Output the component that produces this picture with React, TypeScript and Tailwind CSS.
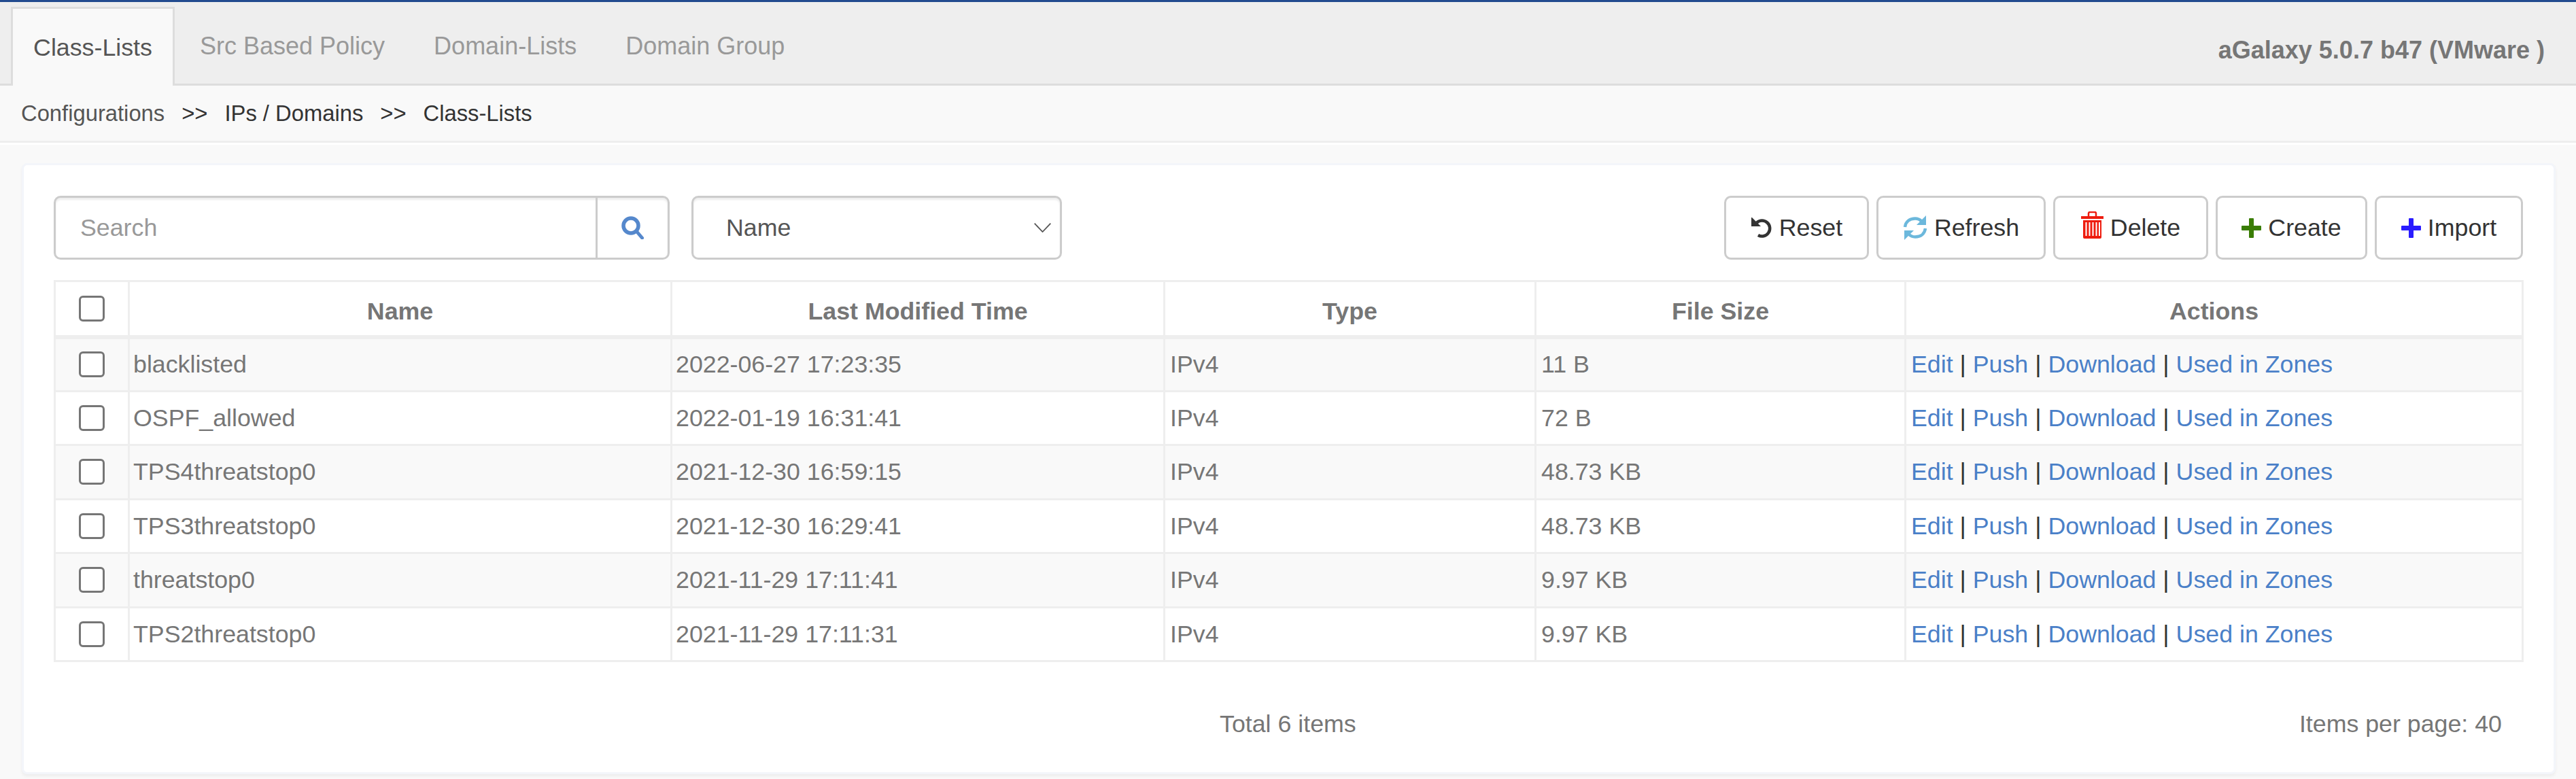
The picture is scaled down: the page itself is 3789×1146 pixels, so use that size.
const rows = [
  { name: "blacklisted", time: "2022-06-27 17:23:35", type: "IPv4", size: "11 B" },
  { name: "OSPF_allowed", time: "2022-01-19 16:31:41", type: "IPv4", size: "72 B" },
  { name: "TPS4threatstop0", time: "2021-12-30 16:59:15", type: "IPv4", size: "48.73 KB" },
  { name: "TPS3threatstop0", time: "2021-12-30 16:29:41", type: "IPv4", size: "48.73 KB" },
  { name: "threatstop0", time: "2021-11-29 17:11:41", type: "IPv4", size: "9.97 KB" },
  { name: "TPS2threatstop0", time: "2021-11-29 17:11:31", type: "IPv4", size: "9.97 KB" },
]

const tabs = ["Src Based Policy", "Domain-Lists", "Domain Group"]

function ResetIcon() {
  return (
    <svg viewBox="0 0 32 32" className="h-[32px] w-[32px] text-[#333]">
      <path d="M9 8.500A11.500 11.500 0 1 1 11 27" fill="none" stroke="currentColor" strokeWidth="4.500" />
      <path d="M1 1h1l13 13H1z" fill="currentColor" />
    </svg>
  )
}

function RefreshIcon() {
  return (
    <svg viewBox="0 0 36 36" className="h-[36px] w-[36px] text-[#6cb8dc]">
      <path d="M3 17C4 9 10 4.500 18 4.500c4 0 7 1.500 9.500 4" fill="none" stroke="currentColor" strokeWidth="4.500" />
      <path d="M33 19c-1 8-7 12.500-15 12.500-4 0-7-1.500-9.500-4" fill="none" stroke="currentColor" strokeWidth="4.500" />
      <path d="M34 0v14H20z" fill="currentColor" />
      <path d="M2 36V22h14z" fill="currentColor" />
    </svg>
  )
}

function TrashIcon() {
  return (
    <svg viewBox="0 0 33 40" className="mb-[8px] h-[40px] w-[33px] text-[#ee1c0e]">
      <path d="M0 7h33v4H0zM3 13h27v25a2 2 0 0 1-2 2H5a2 2 0 0 1-2-2z" fill="currentColor" />
      <path d="M11 7V3a2 2 0 0 1 2-2h7a2 2 0 0 1 2 2v4" fill="none" stroke="currentColor" strokeWidth="2.500" />
      <path d="M7.500 16v20M12.500 16v20M17.500 16v20M22.500 16v20M27 16v20" fill="none" stroke="#fff" strokeWidth="2" />
    </svg>
  )
}

function PlusIcon({ className }: { className: string }) {
  return (
    <svg viewBox="0 0 29 29" className={`h-[29px] w-[29px] ${className}`}>
      <path d="M11 1a1 1 0 0 1 1-1h5a1 1 0 0 1 1 1v10h10a1 1 0 0 1 1 1v5a1 1 0 0 1-1 1H18v10a1 1 0 0 1-1 1h-5a1 1 0 0 1-1-1V18H1a1 1 0 0 1-1-1v-5a1 1 0 0 1 1-1h10z" fill="currentColor" />
    </svg>
  )
}

function SearchIcon() {
  return (
    <svg viewBox="0 0 34 34" className="h-[34px] w-[34px] text-[#5588cc]">
      <circle cx="14" cy="14" r="11" fill="none" stroke="currentColor" strokeWidth="5.500" />
      <path d="M22 22 30.500 32" fill="none" stroke="currentColor" strokeWidth="5" strokeLinecap="round" />
    </svg>
  )
}

function SelectChevron() {
  return (
    <svg viewBox="0 0 25 14" className="h-[14px] w-[25px] text-[#555]">
      <path d="M.7.7 12.500 13 24.300.7" fill="none" stroke="currentColor" strokeWidth="1.800" />
    </svg>
  )
}

function Checkbox() {
  return <div className="mx-auto h-[38px] w-[38px] rounded-[6px] border-[3px] border-[#767676] bg-white" />
}

function ToolButton({ icon, label, className }: { icon: React.ReactNode; label: string; className: string }) {
  return (
    <button className={`flex h-[94px] items-center justify-center gap-[10px] rounded-[10px] border-[3px] border-[#ccc] bg-white text-[35.750px] text-[#333] ${className}`}>
      {icon}
      <span>{label}</span>
    </button>
  )
}

export default function App() {
  return (
    <div className="h-[1146px] w-[3789px] overflow-hidden border-t-[3px] border-[#224b8f] bg-[#f9f9f9] font-['Liberation_Sans',Arial,sans-serif] text-[35.750px] leading-[50px] text-[#767676]">
      {/* Tabs */}
      <div className="flex h-[123px] items-end justify-between border-b-[3px] border-[#ddd] bg-[#eee] pl-[16px] pr-[46px]">
        <div className="flex items-end">
          <div className="relative top-[3px] flex h-[116px] w-[241px] items-center justify-center border-x-[3px] border-t-[3px] border-[#ddd] bg-[#f9f9f9] text-[#555]">
            Class-Lists
          </div>
          <div className="flex pl-[1px] text-[36px]">
            {tabs.map((tab) => (
              <div key={tab} className="flex h-[113px] items-center px-[36px] pt-[3px] text-[#999]">
                {tab}
              </div>
            ))}
          </div>
        </div>
        <div className="mb-[24px] text-[36px] font-bold text-[#767676]">aGalaxy 5.0.7 b47 (VMware )</div>
      </div>

      {/* Breadcrumb */}
      <div className="flex h-[84px] items-center border-b-[3px] border-[#eee] pl-[31px] text-[32.750px] text-[#555]">
        <span>Configurations</span>
        <span className="mx-[25px] text-[#333]">&gt;&gt;</span>
        <span className="text-[#333]">IPs / Domains</span>
        <span className="mx-[25px] text-[#333]">&gt;&gt;</span>
        <span className="text-[#333]">Class-Lists</span>
      </div>
      <div className="h-[3px] bg-white" />

      <div className="pl-[32px] pr-[30px] pt-[27px]">
        <div className="h-[899px] rounded-[8px] border-[3px] border-[#f3f5fa] bg-white pl-[44px] pr-[45px] pt-[45px] shadow-[0_3px_4px_rgba(0,0,0,0.05)]">
          {/* Toolbar */}
          <div className="flex items-start justify-between">
            <div className="flex gap-[32px]">
              <div className="flex h-[94px] w-[906px] rounded-[10px] border-[3px] border-[#ccc] bg-white shadow-[inset_0_3px_3px_rgba(0,0,0,0.075)]">
                <div className="flex flex-1 items-center pl-[36px] text-[#999]">Search</div>
                <div className="flex w-[106px] items-center justify-center border-l-[3px] border-[#ccc]">
                  <SearchIcon />
                </div>
              </div>
              <div className="flex h-[94px] w-[545px] items-center justify-between rounded-[10px] border-[3px] border-[#ccc] bg-white pl-[48px] pr-[13px] text-[#555] shadow-[inset_0_3px_3px_rgba(0,0,0,0.075)]">
                <span>Name</span>
                <SelectChevron />
              </div>
            </div>
            <div className="flex gap-[11px]">
              <ToolButton className="w-[213px]" icon={<ResetIcon />} label="Reset" />
              <ToolButton className="w-[249px]" icon={<RefreshIcon />} label="Refresh" />
              <ToolButton className="w-[228px]" icon={<TrashIcon />} label="Delete" />
              <ToolButton className="w-[223px]" icon={<PlusIcon className="text-[#3a7d05]" />} label="Create" />
              <ToolButton className="w-[218px]" icon={<PlusIcon className="text-[#2a1cff]" />} label="Import" />
            </div>
          </div>

          {/* Table */}
          <table className="mt-[30px] w-[3630px] table-fixed border-collapse">
            <colgroup>
              <col className="w-[109px]" />
              <col className="w-[798px]" />
              <col className="w-[725px]" />
              <col className="w-[546px]" />
              <col className="w-[544px]" />
              <col className="w-[908px]" />
            </colgroup>
            <thead>
              <tr className="h-[82px] border-b-[6px] border-[#eee]">
                <th className="border-[3px] border-[#eee] align-middle">
                  <Checkbox />
                </th>
                {["Name", "Last Modified Time", "Type", "File Size", "Actions"].map((h) => (
                  <th key={h} className="border-x-[3px] border-t-[3px] border-[#eee] pt-[8px] text-center font-bold">
                    {h}
                  </th>
                ))}
              </tr>
            </thead>
            <tbody>
              {rows.map((row, i) => (
                <tr key={row.name} className={`h-[79.500px] ${i % 2 === 0 ? "bg-[#f9f9f9]" : "bg-white"}`}>
                  <td className="border-[3px] border-[#eee]">
                    <Checkbox />
                  </td>
                  <td className="border-[3px] border-[#eee] px-[5px]">{row.name}</td>
                  <td className="border-[3px] border-[#eee] px-[5px]">{row.time}</td>
                  <td className="border-[3px] border-[#eee] px-[7px]">{row.type}</td>
                  <td className="border-[3px] border-[#eee] px-[7px]">{row.size}</td>
                  <td className="border-[3px] border-[#eee] px-[7px] text-[#333]">
                    <span className="text-[#4a80c8]">Edit</span> | <span className="text-[#4a80c8]">Push</span> |{" "}
                    <span className="text-[#4a80c8]">Download</span> | <span className="text-[#4a80c8]">Used in Zones</span>
                  </td>
                </tr>
              ))}
            </tbody>
          </table>

          {/* Footer */}
          <div className="mt-[66px] flex justify-between pl-[1715px] pr-[31px]">
            <span>Total 6 items</span>
            <span>Items per page: 40</span>
          </div>
        </div>
      </div>
    </div>
  )
}
